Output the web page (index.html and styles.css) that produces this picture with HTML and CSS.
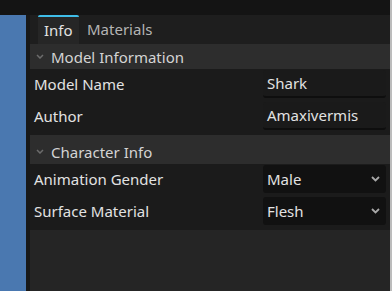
FILE: index.html
```html
<!DOCTYPE html>
<html lang="en">
<head>
    <meta charset="UTF-8">
    <title>Inspector</title>
    <link rel="stylesheet" href="styles.css">
</head>
<body>
    <div class="window">
        <div class="topbar"></div>
        <div class="main">
            <div class="viewport"></div>
            <div class="gutter"></div>
            <div class="panel">
                <div class="tabs">
                    <div class="tab active">Info</div>
                    <div class="tab">Materials</div>
                </div>

                <div class="section-header first">
                    <svg class="fold" width="8" height="5" viewBox="0 0 8 5"><path d="M1 1 L4 4 L7 1" fill="none" stroke="#6c6c6c" stroke-width="1.5"/></svg>
                    <span>Model Information</span>
                </div>
                <div class="section-body">
                    <div class="row">
                        <div class="label">Model Name</div>
                        <div class="line-edit">Shark</div>
                    </div>
                    <div class="row">
                        <div class="label">Author</div>
                        <div class="line-edit">Amaxivermis</div>
                    </div>
                </div>

                <div class="section-header">
                    <svg class="fold" width="8" height="5" viewBox="0 0 8 5"><path d="M1 1 L4 4 L7 1" fill="none" stroke="#6c6c6c" stroke-width="1.5"/></svg>
                    <span>Character Info</span>
                </div>
                <div class="section-body">
                    <div class="row">
                        <div class="label">Animation Gender</div>
                        <div class="option">
                            <span>Male</span>
                            <svg width="9" height="6" viewBox="0 0 9 6"><path d="M1 1 L4.5 4.5 L8 1" fill="none" stroke="#a8a8a8" stroke-width="1.8"/></svg>
                        </div>
                    </div>
                    <div class="row">
                        <div class="label">Surface Material</div>
                        <div class="option">
                            <span>Flesh</span>
                            <svg width="9" height="6" viewBox="0 0 9 6"><path d="M1 1 L4.5 4.5 L8 1" fill="none" stroke="#a8a8a8" stroke-width="1.8"/></svg>
                        </div>
                    </div>
                </div>

                <div class="empty"></div>
            </div>
        </div>
    </div>
    <div class="edge"></div>
</body>
</html>
```

FILE: styles.css
```css
:root {
    --top-bg: #141414;
    --tabs-bg: #1e1e1e;
    --tab-active: #262626;
    --accent: #3fbde8;
    --header-bg: #2d2d2d;
    --row-bg: #1b1b1b;
    --empty-bg: #252525;
    --text: #e2e2e2;
    --text-dim: #b4b4b4;
}

html, body {
    margin: 0;
    padding: 0;
    height: 100%;
}

body {
    font-family: 'Noto Sans', 'Open Sans', sans-serif;
    font-size: 15px;
    color: var(--text);
    background-color: var(--top-bg);
    display: flex;
    overflow: hidden;
}

.window {
    flex: 1;
    display: flex;
    flex-direction: column;
}

.topbar {
    height: 15px;
    background-color: var(--top-bg);
}

.main {
    flex: 1;
    display: flex;
}

.viewport {
    width: 26px;
    background-color: #4a78b0;
}

.gutter {
    width: 4px;
    background-color: #181818;
}

.panel {
    flex: 1;
    display: flex;
    flex-direction: column;
    background-color: var(--row-bg);
}

.tabs {
    display: flex;
    height: 29px;
    padding-left: 8px;
    background-color: var(--tabs-bg);
}

.tab {
    padding: 0 7px 0 8px;
    line-height: 29px;
    color: var(--text-dim);
}

.tab.active {
    width: 29px;
    padding: 0 6px;
    color: var(--text);
    background-color: var(--tab-active);
    border-top: 2px solid var(--accent);
    border-radius: 2px 2px 0 0;
    line-height: 27px;
}

.section-header {
    display: flex;
    align-items: center;
    gap: 7px;
    height: 29px;
    padding: 4px 0 0 6px;
    box-sizing: border-box;
    background-color: var(--header-bg);
    color: #d4d4d4;
}

.section-header.first {
    height: 25px;
    padding-top: 0;
}

.section-body {
    display: flex;
    flex-direction: column;
    gap: 4px;
    padding: 1px 4px 5px 4px;
}

.row {
    display: flex;
    align-items: center;
    justify-content: space-between;
    height: 28px;
}

.line-edit, .option {
    width: 123px;
    height: 28px;
    box-sizing: border-box;
    padding: 0 4px;
    line-height: 26px;
    border-radius: 3px;
}

.line-edit {
    background-color: #1a1a1a;
    border-bottom: 2px solid #0e0e0e;
}

.option {
    display: flex;
    align-items: center;
    justify-content: space-between;
    padding-right: 6px;
    background-color: #111111;
}

.empty {
    flex: 1;
    background-color: var(--empty-bg);
}

.edge {
    width: 2px;
    background-color: #bcbcbc;
}
```
